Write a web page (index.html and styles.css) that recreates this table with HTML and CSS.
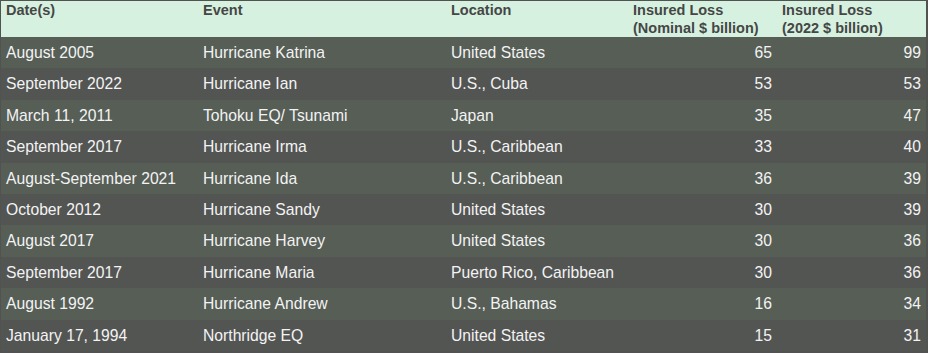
FILE: index.html
```html
<!DOCTYPE html>
<html lang="en">
<head>
    <meta charset="UTF-8">
    <meta name="viewport" content="width=device-width, initial-scale=1.0">
    <title>Costliest Insured Losses</title>
    <link rel="stylesheet" href="styles.css">
</head>
<body>
    <div class="frame">
        <table class="losses">
            <colgroup>
                <col class="c-date">
                <col class="c-event">
                <col class="c-loc">
                <col class="c-num">
                <col class="c-num">
            </colgroup>
            <thead>
                <tr>
                    <th>Date(s)</th>
                    <th>Event</th>
                    <th>Location</th>
                    <th>Insured Loss<br>(Nominal $ billion)</th>
                    <th>Insured Loss<br>(2022 $ billion)</th>
                </tr>
            </thead>
            <tbody>
                <tr><td>August 2005</td><td>Hurricane Katrina</td><td>United States</td><td class="num">65</td><td class="num">99</td></tr>
                <tr><td>September 2022</td><td>Hurricane Ian</td><td>U.S., Cuba</td><td class="num">53</td><td class="num">53</td></tr>
                <tr><td>March 11, 2011</td><td>Tohoku EQ/ Tsunami</td><td>Japan</td><td class="num">35</td><td class="num">47</td></tr>
                <tr><td>September 2017</td><td>Hurricane Irma</td><td>U.S., Caribbean</td><td class="num">33</td><td class="num">40</td></tr>
                <tr><td>August-September 2021</td><td>Hurricane Ida</td><td>U.S., Caribbean</td><td class="num">36</td><td class="num">39</td></tr>
                <tr><td>October 2012</td><td>Hurricane Sandy</td><td>United States</td><td class="num">30</td><td class="num">39</td></tr>
                <tr><td>August 2017</td><td>Hurricane Harvey</td><td>United States</td><td class="num">30</td><td class="num">36</td></tr>
                <tr><td>September 2017</td><td>Hurricane Maria</td><td>Puerto Rico, Caribbean</td><td class="num">30</td><td class="num">36</td></tr>
                <tr><td>August 1992</td><td>Hurricane Andrew</td><td>U.S., Bahamas</td><td class="num">16</td><td class="num">34</td></tr>
                <tr><td>January 17, 1994</td><td>Northridge EQ</td><td>United States</td><td class="num">15</td><td class="num">31</td></tr>
            </tbody>
        </table>
    </div>
</body>
</html>
```

FILE: styles.css
```css
* {
    margin: 0;
    padding: 0;
    box-sizing: border-box;
}

body {
    font-family: "Liberation Sans", Arial, sans-serif;
    background-color: #515351;
    width: 928px;
    height: 353px;
    overflow: hidden;
}

.frame {
    padding: 1px 2px 2px 1px;
}

.losses {
    width: 925px;
    border-collapse: collapse;
    table-layout: fixed;
}

.c-date { width: 197px; }
.c-event { width: 248px; }
.c-loc { width: 182px; }
.c-num { width: 149px; }

.losses th {
    background-color: #d7f1e1;
    color: #454745;
    font-size: 14.5px;
    font-weight: bold;
    line-height: 18px;
    text-align: left;
    vertical-align: top;
    padding: 0 5px;
    height: 36px;
}

.losses td {
    color: #f3f3f3;
    font-size: 15.7px;
    line-height: 19.4px;
    padding: 6px 5px;
    white-space: nowrap;
}

.losses tbody tr:nth-child(odd) {
    background-color: #565e56;
}

.losses tbody tr:nth-child(even) {
    background-color: #535553;
}

.losses td.num {
    text-align: right;
}
```
